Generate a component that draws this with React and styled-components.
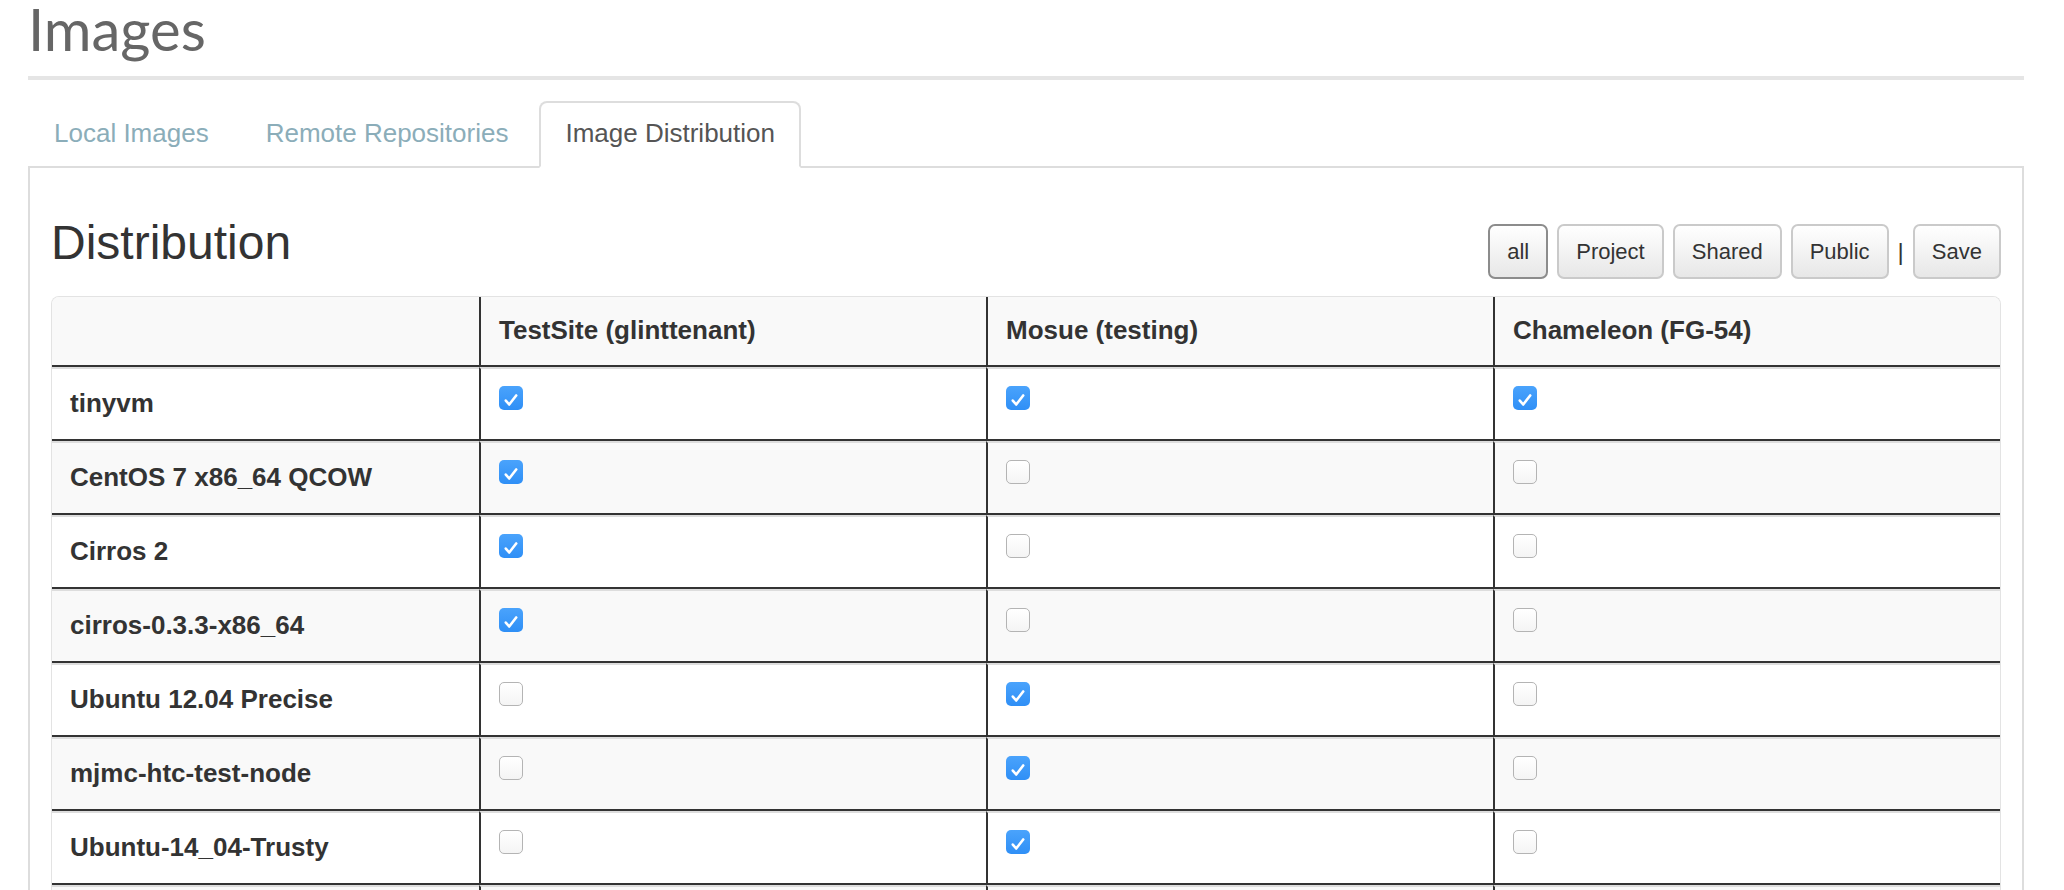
import React from 'react';
import styled, { createGlobalStyle } from 'styled-components';

const GlobalStyle = createGlobalStyle`
  * {
    box-sizing: border-box;
  }
  body {
    margin: 0;
    background: #fff;
    color: #333;
    font-family: "Liberation Sans", Arial, sans-serif;
  }
`;

const Page = styled.div`
  margin-left: 28px;
  width: 1996px;
`;

const PageTitle = styled.h1`
  margin: 0;
  padding-bottom: 18px;
  border-bottom: 4px solid #e5e5e5;
  font-family: Lato, "Open Sans", sans-serif;
  font-weight: 400;
  font-size: 58px;
  line-height: 58px;
  color: #666;
`;

const TabBar = styled.ul`
  display: flex;
  list-style: none;
  margin: 21px 0 0;
  padding: 0;
  border-bottom: 2px solid #ddd;
`;

const Tab = styled.li`
  margin-right: 5px;
  margin-bottom: -2px;
  padding: 15px 24px 18px;
  border: 2px solid ${(p) => (p.$active ? '#ddd' : 'transparent')};
  border-bottom-color: transparent;
  border-radius: 8px 8px 0 0;
  background: ${(p) => (p.$active ? '#fff' : 'transparent')};
  font-size: 26px;
  line-height: 30px;
  color: ${(p) => (p.$active ? '#555' : '#8badb9')};
  cursor: pointer;
`;

const Panel = styled.div`
  border: 2px solid #ddd;
  border-top: none;
  padding: 48px 21px 40px;
`;

const HeadRow = styled.div`
  display: flex;
  justify-content: space-between;
  align-items: flex-start;
  margin-bottom: 17px;
`;

const SectionTitle = styled.h2`
  margin: 0;
  font-size: 48px;
  line-height: 53px;
  font-weight: 400;
  color: #333;
`;

const Toolbar = styled.div`
  display: flex;
  align-items: center;
  gap: 9px;
  margin-top: 8px;
`;

const Button = styled.button`
  height: 55px;
  padding: 0 17px;
  border: 2px solid ${(p) => (p.$active ? '#8c8c8c' : '#cacaca')};
  border-radius: 7px;
  background: linear-gradient(to bottom, #ffffff, #e7e7e7);
  font-family: "Liberation Sans", Arial, sans-serif;
  font-size: 22px;
  color: #333;
  cursor: pointer;
`;

const Divider = styled.span`
  font-size: 24px;
  line-height: 30px;
  color: #333;
`;

const Grid = styled.table`
  width: 100%;
  table-layout: fixed;
  border-collapse: separate;
  border-spacing: 0;
  border: 1px solid #e3e3e3;
  border-bottom: none;
  border-radius: 8px 8px 0 0;
`;

const HeadCell = styled.th`
  padding: 16px 18px 18px;
  background: #f9f9f9;
  border-bottom: 2px solid #333;
  text-align: left;
  font-size: 26px;
  line-height: 34px;
  font-weight: 700;
  color: #333;

  & + & {
    border-left: 2px solid #333;
  }
  &:first-child {
    border-top-left-radius: 7px;
  }
  &:last-child {
    border-top-right-radius: 7px;
  }
`;

const Cell = styled.td`
  padding: 17px 18px 19px;
  background: ${(p) => (p.$striped ? '#f9f9f9' : '#fff')};
  border-top: 2px solid #ddd;
  border-bottom: 2px solid #333;
  vertical-align: top;
  font-size: 26px;
  line-height: 34px;
  font-weight: 700;
  color: #333;

  & + & {
    border-left: 2px solid #333;
  }
`;

const Box = styled.span`
  display: inline-block;
  vertical-align: top;
  width: 24px;
  height: 24px;
  border-radius: 5px;
  border: ${(p) => (p.$checked ? 'none' : '1.5px solid #b4b4b4')};
  background: ${(p) =>
    p.$checked ? 'linear-gradient(to bottom, #4aa3fc, #2f8ff6)' : 'linear-gradient(to bottom, #fff, #f4f4f4)'};
`;

const Checkbox = ({ checked }) => (
  <Box $checked={checked}>
    {checked && (
      <svg width="24" height="24" viewBox="0 0 24 24">
        <path d="M6.8 12.6l3.4 3.9 7-9" fill="none" stroke="#fff" strokeWidth="2.6" strokeLinecap="round" strokeLinejoin="round" />
      </svg>
    )}
  </Box>
);

const sites = ['TestSite (glinttenant)', 'Mosue (testing)', 'Chameleon (FG-54)'];

const images = [
  { name: 'tinyvm', on: [true, true, true] },
  { name: 'CentOS 7 x86_64 QCOW', on: [true, false, false] },
  { name: 'Cirros 2', on: [true, false, false] },
  { name: 'cirros-0.3.3-x86_64', on: [true, false, false] },
  { name: 'Ubuntu 12.04 Precise', on: [false, true, false] },
  { name: 'mjmc-htc-test-node', on: [false, true, false] },
  { name: 'Ubuntu-14_04-Trusty', on: [false, true, false] },
  { name: '', on: [false, false, false] },
];

const filters = ['all', 'Project', 'Shared', 'Public'];

export default function App() {
  return (
    <>
      <GlobalStyle />
      <Page>
        <PageTitle>Images</PageTitle>
        <TabBar>
          <Tab>Local Images</Tab>
          <Tab>Remote Repositories</Tab>
          <Tab $active>Image Distribution</Tab>
        </TabBar>
        <Panel>
          <HeadRow>
            <SectionTitle>Distribution</SectionTitle>
            <Toolbar>
              {filters.map((f) => (
                <Button key={f} $active={f === 'all'}>{f}</Button>
              ))}
              <Divider>|</Divider>
              <Button>Save</Button>
            </Toolbar>
          </HeadRow>
          <Grid>
            <colgroup>
              <col style={{ width: 427 }} />
              <col />
              <col />
              <col />
            </colgroup>
            <thead>
              <tr>
                <HeadCell />
                {sites.map((s) => (
                  <HeadCell key={s}>{s}</HeadCell>
                ))}
              </tr>
            </thead>
            <tbody>
              {images.map((img, i) => (
                <tr key={i}>
                  <Cell $striped={i % 2 === 1}>{img.name}</Cell>
                  {img.on.map((c, j) => (
                    <Cell key={j} $striped={i % 2 === 1}>
                      {img.name && <Checkbox checked={c} />}
                    </Cell>
                  ))}
                </tr>
              ))}
            </tbody>
          </Grid>
        </Panel>
      </Page>
    </>
  );
}
